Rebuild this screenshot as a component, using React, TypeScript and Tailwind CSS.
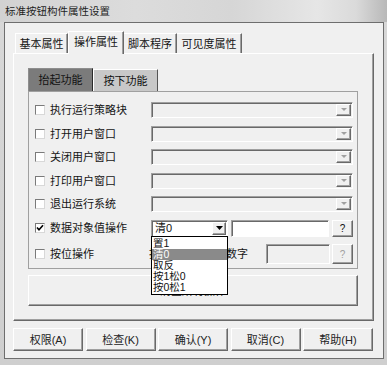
import React from "react";

const F = "font-['Liberation_Sans','Noto_Sans_CJK_SC',sans-serif]";
const raised =
  "bg-[#f0f0f0] border border-t-white border-l-white border-r-[#696969] border-b-[#696969] shadow-[inset_-1px_-1px_0_#a0a0a0]";
const sunken =
  "border border-t-[#a0a0a0] border-l-[#a0a0a0] border-r-white border-b-white shadow-[inset_1px_1px_0_#696969]";

function Arrow({ disabled }: { disabled?: boolean }) {
  return disabled ? (
    <svg width="6" height="4" viewBox="0 0 6 4">
      <path d="M0 0H6L3 3Z" fill="#a0a0a0" />
    </svg>
  ) : (
    <svg width="7" height="4" viewBox="0 0 7 4">
      <path d="M0 0H7L3.5 4Z" fill="#000" />
    </svg>
  );
}

function Check({ checked }: { checked?: boolean }) {
  return (
    <div className="w-[10px] h-[10px] bg-white border border-t-[#7a7a7a] border-l-[#7a7a7a] border-r-[#d8d8d8] border-b-[#d8d8d8] flex items-center justify-center shrink-0">
      {checked && (
        <svg width="8" height="8" viewBox="0 0 8 8">
          <path d="M1 3.5 L3 5.8 L7 1.2" stroke="#000" strokeWidth="1.6" fill="none" />
        </svg>
      )}
    </div>
  );
}

function DisabledCombo() {
  return (
    <div className={`w-[202px] h-[16px] bg-[#f0f0f0] ${sunken} flex justify-end p-[1px]`}>
      <div className={`w-[15px] h-full ${raised} flex items-center justify-center`}>
        <Arrow disabled />
      </div>
    </div>
  );
}

function Left({ label, checked, w = "w-[122px]" }: { label: string; checked?: boolean; w?: string }) {
  return (
    <div className={`${w} shrink-0 flex items-center pl-[6px]`}>
      <Check checked={checked} />
      <span className="ml-[5px] text-[11px] leading-[12px] text-[#151515] whitespace-nowrap">{label}</span>
    </div>
  );
}

const items = ["置1", "清0", "取反", "按1松0", "按0松1"];

export default function App() {
  return (
    <div
      className={`${F} w-[387px] h-[365px] overflow-hidden bg-[linear-gradient(180deg,#d8d8d8,#cfcfcf)] flex flex-col`}
    >
      {/* title bar */}
      <div className="h-[22px] shrink-0 flex items-center pl-[5px] bg-[linear-gradient(90deg,#d2d2d2_0%,#dcdcdc_35%,#d6d6d6_60%,#e6e6e6_82%,#dadada_92%,#b8b8b8_100%)]">
        <span className="text-[10.5px] leading-[12px] text-[#1e1e1e] whitespace-nowrap">标准按钮构件属性设置</span>
      </div>

      {/* client */}
      <div className="ml-[4px] w-[380px] h-[337px] shrink-0 border border-[#6e6e6e] bg-[#f0f0f0] pl-[8px] pt-[8px] flex flex-col">
        {/* tab strip */}
        <div className="h-[22px] flex items-end pl-[2px]">
          <div className="w-[53px] h-[20px] border-t border-l border-r border-t-white border-l-white border-r-[#696969] shadow-[inset_-1px_0_0_#a0a0a0] flex items-center justify-center text-[11px] leading-[12px] text-[#151515]">
            基本属性
          </div>
          <div className="w-[56px] h-[23px] -mb-[1px] relative z-10 bg-[#f0f0f0] border-t border-l border-r border-t-white border-l-white border-r-[#696969] shadow-[inset_-1px_0_0_#a0a0a0] flex items-center justify-center pb-[2px] text-[11px] leading-[12px] text-[#151515]">
            操作属性
          </div>
          <div className="w-[53px] h-[20px] border-t border-r border-t-white border-r-[#696969] shadow-[inset_-1px_0_0_#a0a0a0] flex items-center justify-center text-[11px] leading-[12px] text-[#151515]">
            脚本程序
          </div>
          <div className="w-[65px] h-[20px] border-t border-r border-t-white border-r-[#696969] shadow-[inset_-1px_0_0_#a0a0a0] flex items-center justify-center text-[11px] leading-[12px] text-[#151515]">
            可见度属性
          </div>
        </div>

        {/* tab panel */}
        <div className="w-[361px] h-[268px] border border-t-white border-l-white border-r-[#696969] border-b-[#696969] shadow-[inset_-1px_-1px_0_#a0a0a0] pl-[14px] pt-[14px] flex flex-col">
          {/* sub tabs */}
          <div className="h-[23px] flex items-end">
            <div className="w-[65px] h-[23px] bg-[#7b7b7b] border-t border-l border-r border-t-[#8e8e8e] border-l-[#8e8e8e] border-r-[#2a2a2a] flex items-center justify-center text-[11px] leading-[12px] text-[#111]">
              抬起功能
            </div>
            <div className="w-[65px] h-[22px] bg-[#c8c8c8] border-t border-l border-r border-t-white border-l-white border-r-[#555] flex items-center justify-center text-[11px] leading-[12px] text-[#111]">
              按下功能
            </div>
          </div>

          {/* sub panel */}
          <div className="w-[330px] h-[178px] border border-t-[#a0a0a0] border-l-[#a0a0a0] border-r-[#a0a0a0] border-b-[#a0a0a0] pt-[10px] pr-[4px] flex flex-col gap-[7.5px]">
            <div className="flex items-center h-[16px]">
              <Left label="执行运行策略块" />
              <DisabledCombo />
            </div>
            <div className="flex items-center h-[16px]">
              <Left label="打开用户窗口" />
              <DisabledCombo />
            </div>
            <div className="flex items-center h-[16px]">
              <Left label="关闭用户窗口" />
              <DisabledCombo />
            </div>
            <div className="flex items-center h-[16px]">
              <Left label="打印用户窗口" />
              <DisabledCombo />
            </div>
            <div className="flex items-center h-[16px]">
              <Left label="退出运行系统" />
              <DisabledCombo />
            </div>
            {/* row 6 */}
            <div className="flex items-center h-[17px]">
              <Left label="数据对象值操作" checked />
              <div className={`relative w-[77px] h-[17px] bg-white ${sunken} flex items-center p-[1px]`}>
                <span className="pl-[2px] flex-1 text-[11px] leading-[12px] text-[#111]">清0</span>
                <div className={`w-[14px] h-full ${raised} flex items-center justify-center`}>
                  <Arrow />
                </div>
                {/* dropdown list */}
                <div className="absolute z-20 left-[-1px] top-[15px] w-[77px] h-[59px] bg-white border border-black pt-[1px] flex flex-col">
                  {items.map((t) => (
                    <div
                      key={t}
                      className={`h-[11.2px] pl-[1px] flex items-center text-[10.5px] leading-[11px] whitespace-nowrap ${
                        t === "清0" ? "bg-[#8a8a8a] text-white" : "text-[#111]"
                      }`}
                    >
                      {t}
                    </div>
                  ))}
                </div>
              </div>
              <div className={`ml-[3px] w-[98px] h-[17px] bg-white ${sunken}`} />
              <div className={`ml-[3px] w-[21px] h-[17px] ${raised} flex items-center justify-center text-[10px] leading-[11px] text-[#111]`}>
                ?
              </div>
            </div>
            {/* row 7 */}
            <div className="flex items-center h-[20px]">
              <Left label="按位操作" w="w-[120px]" />
              <span className="text-[11px] leading-[12px] text-[#151515] whitespace-nowrap">指定位：变量或数字</span>
              <div className={`ml-auto w-[64px] h-[20px] bg-[#f0f0f0] ${sunken}`} />
              <div className={`ml-[2px] w-[21px] h-[20px] ${raised} flex items-center justify-center text-[10px] leading-[11px] text-[#a0a0a0]`}>
                ?
              </div>
            </div>
          </div>

          {/* clear button */}
          <div className={`mt-[6px] w-[330px] h-[31px] ${raised} flex items-center justify-center text-[11px] leading-[12px] text-[#111]`}>
            清空所有操作
          </div>
        </div>

        {/* bottom buttons */}
        <div className="mt-[7px] w-[360px] flex justify-between">
          {["权限(A)", "检查(K)", "确认(Y)", "取消(C)", "帮助(H)"].map((t) => (
            <div
              key={t}
              className={`w-[70px] h-[23px] ${raised} flex items-center justify-center text-[11px] leading-[12px] text-[#222]`}
            >
              {t}
            </div>
          ))}
        </div>
      </div>
    </div>
  );
}
